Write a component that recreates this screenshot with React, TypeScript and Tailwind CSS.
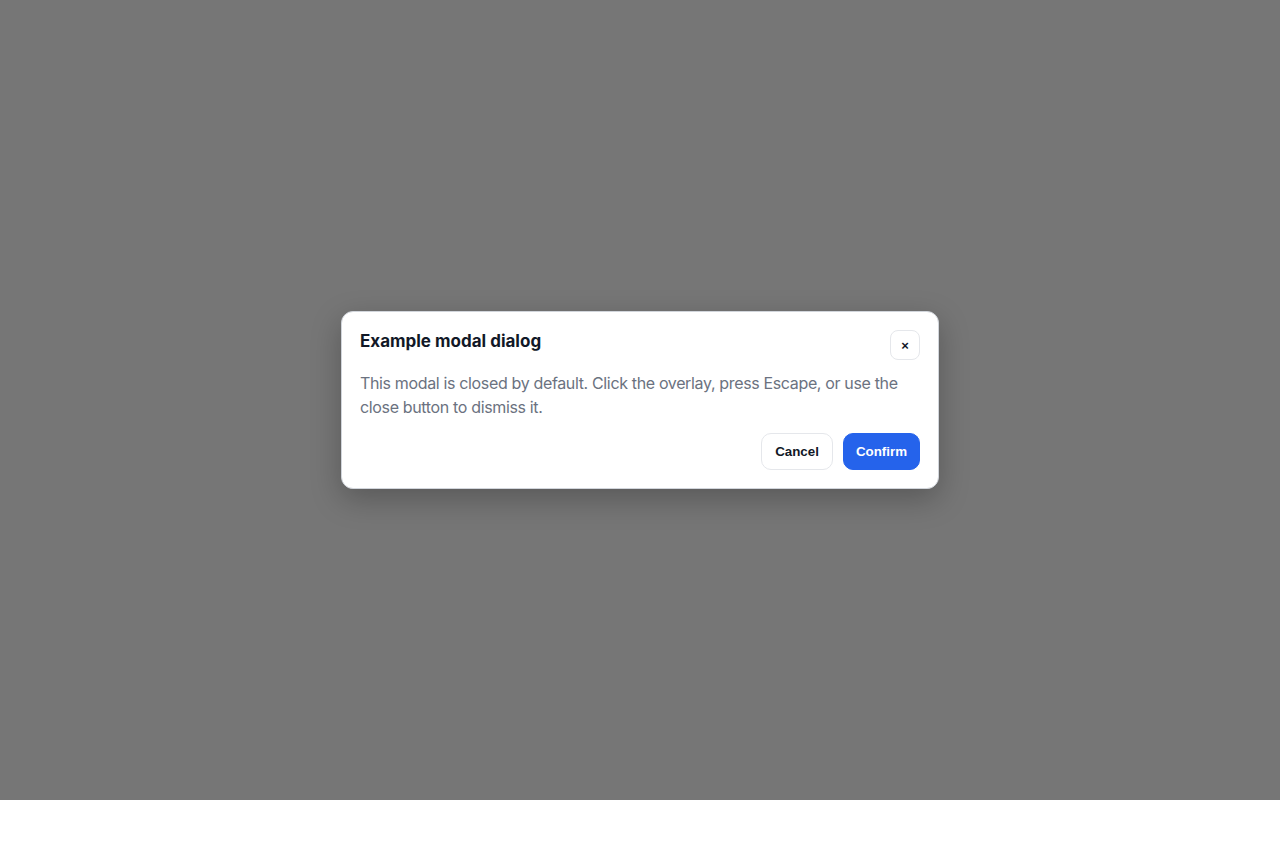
export default function App() {
  return (
    <div className="w-full min-h-screen bg-white" style={{ fontFamily: "Inter, 'Liberation Sans', sans-serif" }}>
      <div className="w-full h-[800px] bg-[#767676] flex items-center justify-center">
        <div
          role="dialog"
          className="w-[598px] bg-white border border-[#d1d5db] rounded-xl p-[18px] shadow-[0_10px_30px_rgba(0,0,0,0.25)]"
        >
          <div className="flex items-start justify-between">
            <h2 className="text-[17px] leading-6 font-bold text-[#111827] mt-[-1px]">Example modal dialog</h2>
            <button className="w-[30px] h-[30px] rounded-lg border border-[#e5e7eb] bg-white flex items-center justify-center text-[13px] font-bold text-[#111827] leading-none font-['Liberation_Sans',Arial,sans-serif]">
              ×
            </button>
          </div>
          <p className="mt-[11px] text-[16px] leading-6 text-[#6b7280] tracking-[-0.35px]">
            This modal is closed by default. Click the overlay, press Escape, or use the close button to dismiss it.
          </p>
          <div className="mt-[14px] flex justify-end gap-[10px] font-['Liberation_Sans',Arial,sans-serif]">
            <button className="h-[37px] px-[13px] rounded-[10px] border border-[#e5e7eb] bg-white text-[13.33px] font-bold text-[#111827]">
              Cancel
            </button>
            <button className="h-[37px] px-3 rounded-[10px] border border-[#2563eb] bg-[#2563eb] text-[13.33px] font-bold text-white">
              Confirm
            </button>
          </div>
        </div>
      </div>
    </div>
  );
}
